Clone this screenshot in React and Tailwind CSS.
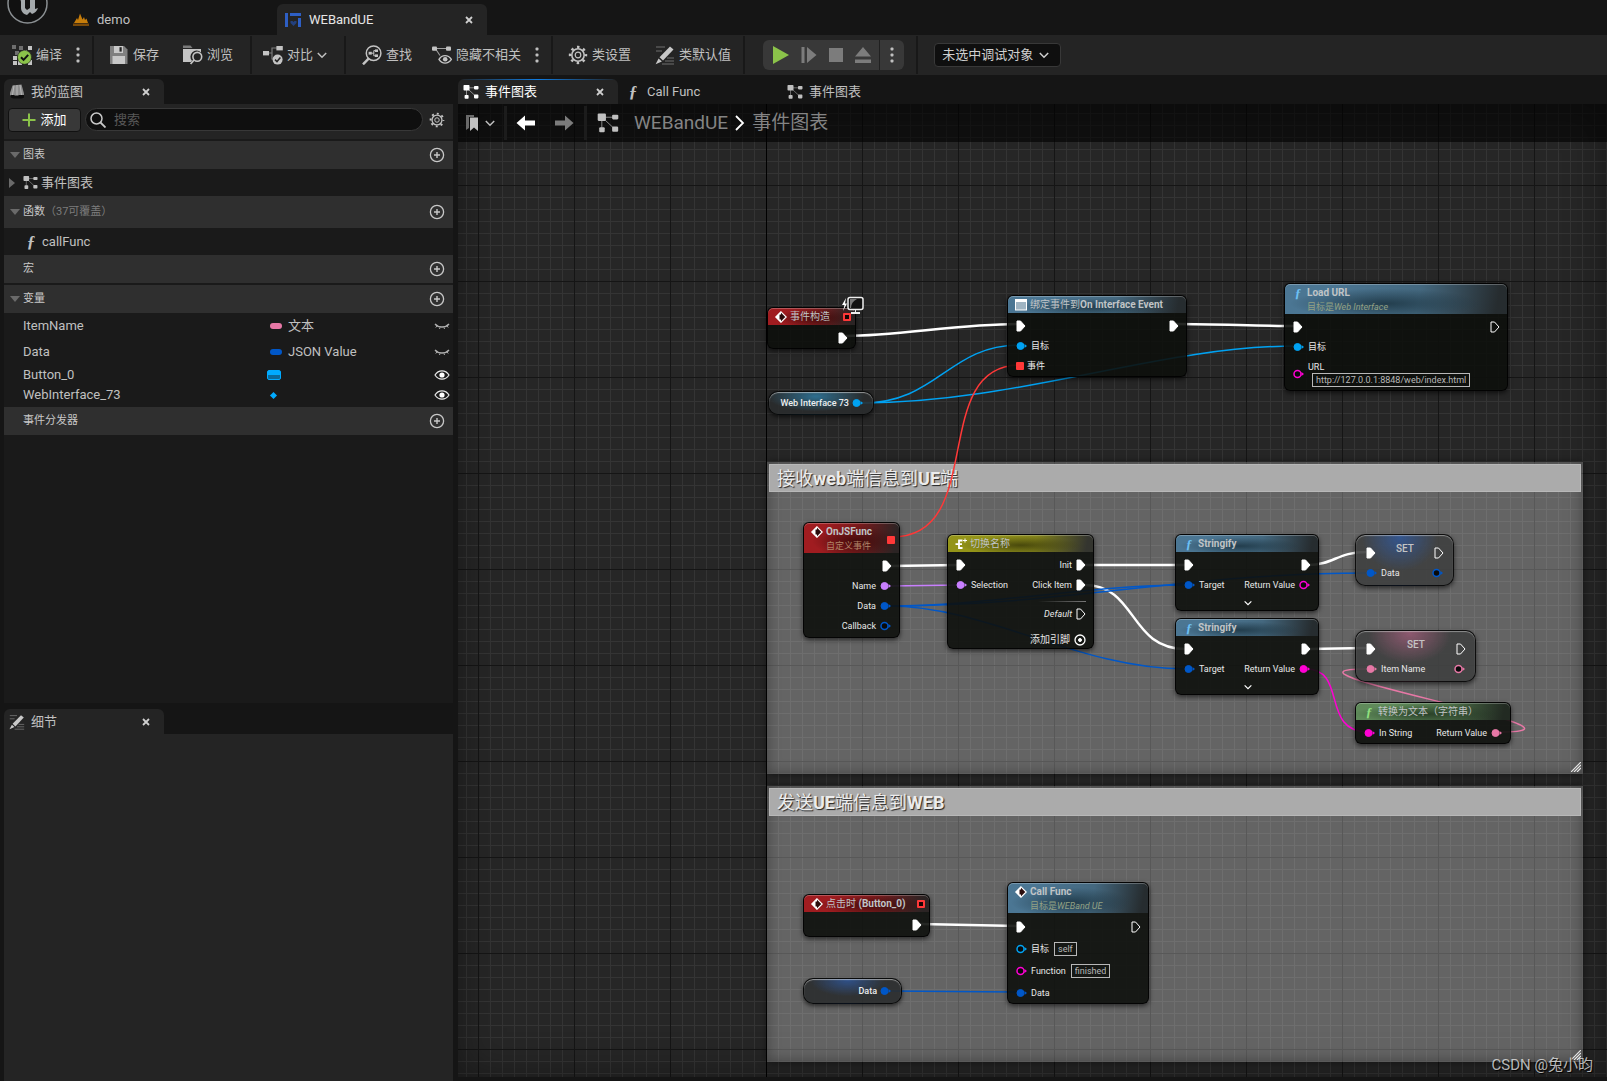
import React from "react";
import clsx from "clsx";

// ---------- icons ----------

const GraphIcon = ({ className = "size-4" }) => (
  <svg viewBox="0 0 16 16" className={className} fill="currentColor">
    <path d="M3.5 3.5L3.5 13M3.5 3.8H13M6 6l7 6.5" stroke="currentColor" strokeWidth="0.7" strokeOpacity="0.7" fill="none" />
    <rect x="0.5" y="1" width="6" height="5.5" rx="0.8" />
    <rect x="11" y="2" width="4.5" height="3.4" rx="0.8" />
    <rect x="1.6" y="11" width="4" height="3.8" rx="0.8" />
    <rect x="11" y="10.6" width="4.4" height="3.8" rx="0.8" />
  </svg>
);

const FuncIcon = ({ className }) => (
  <span aria-hidden="true" className={clsx("inline-block text-center font-['Liberation_Serif',serif] font-bold italic", className)}>
    ƒ
  </span>
);

const CloseIcon = () => (
  <svg viewBox="0 0 8 8" className="size-2">
    <path d="M1 1l6 6M7 1L1 7" stroke="#cfcfcf" strokeWidth="1.8" />
  </svg>
);

const Chevron = ({ className = "size-2.5" }) => (
  <svg viewBox="0 0 10 10" className={className} fill="none" stroke="currentColor" strokeWidth="1.5">
    <path d="M0.8 3l4.2 4.2L9.2 3" />
  </svg>
);

const Dots = () => (
  <svg viewBox="0 0 4 16" className="h-4 w-1" fill="#c0c0c0">
    <rect x="0.5" y="0.5" width="3" height="3" rx="1" />
    <rect x="0.5" y="6.5" width="3" height="3" rx="1" />
    <rect x="0.5" y="12.5" width="3" height="3" rx="1" />
  </svg>
);

const CompileIcon = () => (
  <svg viewBox="0 0 20 20" className="size-5">
    <g fill="#6e6e6e">
      <rect x="0" y="0" width="4" height="4" />
      <rect x="7" y="1" width="4" height="4" />
      <rect x="3" y="6" width="4" height="4" />
    </g>
    <g fill="#c4c4c4">
      <rect x="16" y="1" width="4" height="4" />
      <rect x="1" y="11" width="4" height="4" />
      <rect x="1" y="16" width="4" height="4" />
      <rect x="6" y="15" width="4" height="5" />
      <rect x="16" y="15" width="4" height="5" />
      <rect x="11" y="5" width="4" height="3" />
    </g>
    <circle cx="12.5" cy="12.3" r="7" fill="#8bc34a" stroke="#1b1b1b" strokeWidth="0.6" />
    <path d="M9 12.2l2.6 2.7 4.6-5" fill="none" stroke="#111" strokeWidth="2" />
  </svg>
);

const SaveIcon = () => (
  <svg viewBox="0 0 20 20" className="size-5">
    <path d="M1 1h14l3.5 3.5V19H1z" fill="#808080" />
    <path d="M5 1h9v7H5z" fill="#c8c8c8" />
    <rect x="10.5" y="2.2" width="2.2" height="4.4" fill="#242424" />
    <rect x="3.5" y="11" width="12.5" height="8" fill="#c8c8c8" />
  </svg>
);

const BrowseIcon = () => (
  <svg viewBox="0 0 20 20" className="size-5">
    <path d="M0 0.5h7.5l2 2.5H0z" fill="#7a7a7a" />
    <path d="M0 4h18v3.6a5.8 5.8 0 0 0-9 8.2L8 17H0z" fill="#c4c4c4" />
    <circle cx="14.3" cy="11.8" r="4.4" fill="none" stroke="#c4c4c4" strokeWidth="1.6" />
    <path d="M11 15l-3.4 4" stroke="#c4c4c4" strokeWidth="1.8" />
  </svg>
);

const DiffIcon = () => (
  <svg viewBox="0 0 20 20" className="size-5">
    <path d="M5 8h4M9 8V3h5M9 8v6h2" fill="none" stroke="#7a7a7a" strokeWidth="1.2" />
    <rect x="0" y="6" width="6" height="4.4" fill="#c4c4c4" />
    <rect x="13.4" y="1" width="6.4" height="4.4" fill="#c4c4c4" />
    <circle cx="14.6" cy="14.6" r="5" fill="#c4c4c4" />
    <path d="M12 14.6l2 2 3.4-4" fill="none" stroke="#242424" strokeWidth="1.5" />
  </svg>
);

const FindIcon = () => (
  <svg viewBox="0 0 20 20" className="size-5" fill="none" stroke="#c4c4c4">
    <circle cx="11.6" cy="8.2" r="7.3" strokeWidth="1.5" />
    <path d="M6.6 13.6L1 19.4" strokeWidth="2.4" />
    <path d="M9.4 8.2h2.4M14.6 5.6h-2.8v5.2h2.8" strokeWidth="1" />
    <rect x="6.6" y="6.8" width="3.2" height="2.8" fill="#c4c4c4" stroke="none" />
    <rect x="13" y="4.4" width="3" height="2.6" fill="#c4c4c4" stroke="none" />
    <rect x="13" y="9.4" width="3" height="2.6" fill="#c4c4c4" stroke="none" />
  </svg>
);

const HideIcon = () => (
  <svg viewBox="0 0 20 20" className="size-5">
    <path d="M3 3.5h13M4 4.5l4 6" stroke="#a0a0a0" strokeWidth="1.1" />
    <rect x="0" y="1.4" width="5" height="4.4" rx="1" fill="#c4c4c4" />
    <rect x="14" y="1.4" width="5" height="4.4" rx="1" fill="#c4c4c4" />
    <path d="M7 14.4c3-5 9-5 12.4 0-3.4 5-9.4 5-12.4 0z" fill="#242424" stroke="#c4c4c4" strokeWidth="1.4" />
    <circle cx="13.2" cy="14.2" r="2.3" fill="#c4c4c4" />
  </svg>
);

const GearIcon = ({ className = "size-5" }) => (
  <svg viewBox="0 0 20 20" className={className} fill="none" stroke="#c4c4c4">
    <circle cx="10" cy="10" r="6.2" strokeWidth="1.6" />
    <circle cx="10" cy="10" r="2.8" strokeWidth="1.2" />
    <circle cx="10" cy="10" r="8" strokeWidth="2.4" strokeDasharray="2.5 3.783" strokeDashoffset="1.25" />
  </svg>
);

const PencilIcon = ({ className = "size-5" }) => (
  <svg viewBox="0 0 20 20" className={className}>
    <path d="M1 2h9M1 6h6M12 13h7M10 16h9M7 19h12" stroke="#6e6e6e" strokeWidth="1.1" />
    <path d="M15 1.5l3.5 3L8 15.5l-3.5-3.2z" fill="#c8c8c8" />
    <path d="M3.6 13.4l3.3 3L0.6 19.2z" fill="#c8c8c8" />
  </svg>
);

const PlusCircle = () => (
  <svg viewBox="0 0 16 16" className="size-4" fill="none" stroke="#c8c8c8">
    <circle cx="8" cy="8" r="6.6" strokeWidth="1.3" />
    <path d="M8 5v6M5 8h6" strokeWidth="1.4" />
  </svg>
);

const BlueprintIcon = () => (
  <svg viewBox="0 0 16 16" className="size-4">
    <path d="M3.5 1.500l9-1 2.500 9v2H1V9z" fill="#8c8c8c" />
    <path d="M5 1.500L3.500 11M8 1v10M11 1l1.500 10" stroke="#b8b8b8" strokeWidth="1" />
    <path d="M1.500 11h3.500l1 1h3l1-1h5v2.500l-2 1h-9l-2-1z" fill="#0d0d0d" />
  </svg>
);

const OpenEye = () => (
  <svg viewBox="0 0 16 12" className="h-3 w-4">
    <path d="M1 6c3.5-5.5 10.5-5.5 14 0-3.5 5.5-10.5 5.5-14 0z" fill="none" stroke="#e8e8e8" strokeWidth="1.2" />
    <circle cx="8" cy="6" r="2.6" fill="#fff" />
  </svg>
);

const ClosedEye = () => (
  <svg viewBox="0 0 16 12" className="h-3 w-4" fill="none" stroke="#b0b0b0">
    <path d="M1 4c3.5 4 10.5 4 14 0" strokeWidth="1.3" />
    <path d="M3 6L1.8 7.5M6 7.5L5.5 9M10 7.5l0.5 1.5M13 6l1.2 1.5" strokeWidth="1" />
  </svg>
);

const EventIcon = () => (
  <svg viewBox="0 0 12 12" className="size-3 shrink-0">
    <path d="M6 0.800L11.200 6 6 11.200 0.800 6z" fill="#2a0c0c" stroke="#fff" strokeWidth="1.200" />
    <path d="M6 0.500L0.500 6 6 11.500V8.500H4.500v-5H6z" fill="#fff" />
  </svg>
);

const SwitchIcon = () => (
  <svg viewBox="0 0 12 12" className="size-3 shrink-0" stroke="#fff" fill="none">
    <path d="M7.5 2.500H4v7.500h3.500M0.500 6.200H7" strokeWidth="1.800" />
    <path d="M10 0.500v4M8 2.500h4" strokeWidth="1" />
  </svg>
);

const WindowIcon = () => (
  <svg viewBox="0 0 12 12" className="size-3 shrink-0">
    <rect x="0.5" y="0.5" width="11" height="10.5" fill="#9fb4c2" stroke="#fff" />
    <rect x="0" y="0" width="12" height="3" fill="#fff" />
  </svg>
);

// ---------- pins ----------

const pinColors = {
  exec: "text-white",
  object: "text-[#00a2f2]",
  struct: "text-[#0057c8]",
  string: "text-[#ff00d4]",
  name: "text-[#c87fff]",
  text: "text-[#e778a6]",
  delegate: "text-[#ff3838]",
};

function Pin({ type, hollow }) {
  if (type === "exec") {
    return (
      <svg viewBox="0 0 10 12" className="h-3 w-2.5 shrink-0">
        <path
          d="M1 1h3.5L9 6l-4.5 5H1z"
          fill={hollow ? "none" : "#fff"}
          stroke="#fff"
          strokeWidth="1"
          strokeLinejoin="round"
        />
      </svg>
    );
  }
  if (type === "delegate") {
    return <Delegate hollow={hollow} />;
  }
  return (
    <svg viewBox="0 0 12 10" className={clsx("h-2.5 w-3 shrink-0", pinColors[type])}>
      <path d="M8.5 3l2.5 2-2.5 2z" fill="currentColor" />
      <circle cx="4.5" cy="5" r="3.5" fill={hollow ? "#0a0a0a" : "currentColor"} stroke="currentColor" strokeWidth={hollow ? 1.5 : 1} />
    </svg>
  );
}

const Delegate = ({ hollow }) => (
  <span
    className={clsx(
      "size-2 shrink-0 rounded-[1px]",
      hollow ? "border-2 border-[#ff3838] bg-[#1a0505]" : "bg-[#ff3838]"
    )}
  />
);

// latin runs are bold, chinese stays regular
function Mixed({ text }) {
  return text.split(/([\u2e80-\uffef]+)/).map((part, i) =>
    /[\u2e80-\uffef]/.test(part) ? (
      <span key={i} className="font-normal">{part}</span>
    ) : (
      <span key={i} className="font-bold">{part}</span>
    )
  );
}

// ---------- nodes ----------

const tones = {
  red: "bg-[radial-gradient(ellipse_at_55%_60%,#3a0808cc,transparent_60%),linear-gradient(100deg,#a01c20_20%,#7a1a1c_55%,#2b2424_95%)]",
  blue: "bg-[radial-gradient(ellipse_at_45%_65%,#1a323fcc,transparent_55%),linear-gradient(100deg,#4b7693_20%,#44687f_60%,#262c2f_95%)]",
  olive: "bg-[radial-gradient(ellipse_at_50%_60%,#3a3a08cc,transparent_60%),linear-gradient(100deg,#949418_20%,#82821c_60%,#34352f_95%)]",
  green: "bg-[radial-gradient(ellipse_at_45%_65%,#1f331fcc,transparent_60%),linear-gradient(100deg,#5f8a5a_20%,#4c6e48_60%,#222a22_95%)]",
};

function Node({ x, y, size, tone, icon, title, subtitle, badge, children }) {
  return (
    <div
      style={{ left: x, top: y }}
      className={clsx(
        "absolute flex flex-col rounded-md border border-black/80 bg-[#0d100c]/90 shadow-[0_2px_5px_rgba(0,0,0,0.6)]",
        size
      )}
    >
      <div
        className={clsx(
          "flex shrink-0 gap-[3px] rounded-t-[5px] pr-1 pl-[7px] shadow-[inset_0_1px_0_rgba(255,255,255,0.25)]",
          subtitle ? "h-[30px] pt-[3px]" : "h-[17px] items-center",
          tones[tone]
        )}
      >
        {icon}
        <div className="min-w-0 flex-1 text-[10px] leading-3 whitespace-nowrap text-[#c0c4c6]">
          <p>
            <Mixed text={title} />
          </p>
          {subtitle && <p className="pt-0.5 text-[9px] text-[#93a184]">{subtitle}</p>}
        </div>
        {badge}
      </div>
      <div className="flex flex-1 flex-col pt-[3px] pr-[7px] pl-2">{children}</div>
    </div>
  );
}

const Row = ({ className = "h-5", children }) => (
  <div className={clsx("flex shrink-0 items-center justify-between text-[9px] leading-3 whitespace-nowrap text-[#e8e8e8]", className)}>
    {children}
  </div>
);

const In = ({ type, hollow, label, children }) => (
  <div className="flex items-center gap-[3px]">
    <Pin type={type} hollow={hollow} />
    {label && <span>{label}</span>}
    {children}
  </div>
);

const Out = ({ type, hollow, label, italic }) => (
  <div className="ml-auto flex items-center gap-1">
    {label && <span className={clsx(italic && "italic")}>{label}</span>}
    <Pin type={type} hollow={hollow} />
  </div>
);

const PinInput = ({ label, value, className }) => (
  <input
    aria-label={label}
    defaultValue={value}
    className={clsx("field-sizing-content h-3.5 border border-[#b8b8b8] bg-transparent px-[3px] text-[9px] leading-3 text-[#b8b8b8] outline-none", className)}
  />
);

function Stringify({ x, y, connected }) {
  return (
    <Node x={x} y={y} size="h-[77px] w-[144px]" tone="blue" title="Stringify" icon={<FuncIcon className="w-3 text-[13px] leading-3 text-[#6cc0f5]" />}>
      <Row>
        <In type="exec" />
        <Out type="exec" />
      </Row>
      <Row>
        <In type="struct" label="Target" />
        <Out type="string" hollow={!connected} label="Return Value" />
      </Row>
      <button aria-label="展开" className="mx-auto pt-1 text-white">
        <Chevron className="size-2" />
      </button>
    </Node>
  );
}

const glows = {
  object: "bg-[radial-gradient(ellipse_at_45%_20%,#2f7fa8cc,transparent_60%)]",
  struct: "bg-[radial-gradient(ellipse_at_45%_5%,#2f5ca8bb,transparent_50%)]",
  text: "bg-[radial-gradient(ellipse_at_45%_5%,#a8607fbb,transparent_45%)]",
};

function SetNode({ x, y, size, type, label }) {
  return (
    <div
      style={{ left: x, top: y }}
      className={clsx(
        "absolute h-[52px] rounded-[10px] border border-black/80 bg-[#3e3f3f]/90 pt-2 pr-[9px] pl-2.5 shadow-[inset_0_1px_1px_rgba(255,255,255,0.4),0_2px_5px_rgba(0,0,0,0.6)]",
        glows[type],
        size
      )}
    >
      <Row className="h-5">
        <Pin type="exec" />
        <span className="self-start text-[10px] leading-3 font-medium text-[#c4c4c4]">SET</span>
        <Pin type="exec" hollow />
      </Row>
      <Row>
        <In type={type} label={label} />
        <Out type={type} hollow />
      </Row>
    </div>
  );
}

const GetNode = ({ x, y, size, type, label }) => (
  <div
    style={{ left: x, top: y }}
    className={clsx(
      "absolute flex items-center justify-end gap-[3px] rounded-[10px] border border-black/80 bg-[#2a2c2d]/90 pr-[9px] text-[9px] leading-3 font-medium whitespace-nowrap text-[#eee] shadow-[inset_0_1px_1px_rgba(255,255,255,0.5),0_2px_4px_rgba(0,0,0,0.6)]",
      glows[type],
      size
    )}
  >
    {label}
    <Pin type={type} />
  </div>
);

function Comment({ x, y, size, title }) {
  return (
    <div
      style={{ left: x, top: y }}
      className={clsx(
        "absolute flex flex-col bg-[#f5f5f5]/30 p-0.5 shadow-[inset_0_0_14px_rgba(0,0,0,0.35),0_0_8px_rgba(0,0,0,0.5)]",
        size
      )}
    >
      <h2 className="h-7 border border-[#b8b8b8] bg-[#ababab] pl-[7px] text-lg leading-7 text-[#ececec] [text-shadow:1px_1px_1px_#222]">
        <Mixed text={title} />
      </h2>
      <svg viewBox="0 0 10 10" className="mt-auto ml-auto size-2.5" stroke="#e8e8e8" strokeWidth="1.2">
        <path d="M0 10L10 0M3 10l7-7M6 10l4-4" />
      </svg>
    </div>
  );
}

const wires = [
  { d: "M388 232C440 232 500 220 560 220", kind: "exec" },
  { d: "M718 220C760 220 800 222 840 222", kind: "exec" },
  { d: "M404 299C480 299 490 241 562 241", kind: "object" },
  { d: "M404 299C560 299 700 242 838 242", kind: "object" },
  { d: "M434 433C530 433 470 261 562 261", kind: "delegate" },
  { d: "M432 462L500 461", kind: "exec" },
  { d: "M432 482L502 481", kind: "name" },
  { d: "M626 461L728 461", kind: "exec" },
  { d: "M626 481C680 481 670 545 728 545", kind: "exec" },
  { d: "M430 502C530 502 630 481 728 481", kind: "struct" },
  { d: "M430 502C600 502 730 469 908 469", kind: "struct" },
  { d: "M430 502C530 502 620 565 728 565", kind: "struct" },
  { d: "M850 461C875 461 880 448 908 448", kind: "exec" },
  { d: "M850 545L908 544", kind: "exec" },
  { d: "M848 565C890 565 862 628 910 628", kind: "string" },
  { d: "M1042 628C1163 628 791 565 908 565", kind: "text" },
  { d: "M462 820L560 822", kind: "exec" },
  { d: "M430 887L558 888", kind: "struct" },
];

function Wires() {
  return (
    <svg className="pointer-events-none absolute inset-0 size-full" fill="none">
      {wires.map(({ d, kind }) => (
        <path key={d} d={d} stroke="currentColor" strokeWidth={kind === "exec" ? 2.5 : 1.5} className={pinColors[kind]} />
      ))}
    </svg>
  );
}

function Canvas() {
  return (
    <div className="absolute inset-x-0 top-0 bottom-1 overflow-hidden bg-[#262626] bg-[linear-gradient(to_right,#151515_1px,transparent_1px),linear-gradient(to_bottom,#151515_1px,transparent_1px),linear-gradient(to_right,#343434_1px,transparent_1px),linear-gradient(to_bottom,#343434_1px,transparent_1px)] [background-position:20px_81px,20px_81px,8px_9px,8px_9px] [background-size:96px_96px,96px_96px,12px_12px,12px_12px] shadow-[inset_0_0_40px_rgba(0,0,0,0.4)]">
      <div className="absolute inset-y-0 left-[308px] w-px bg-black" />
      <Comment x={309} y={358} size="h-[312px] w-[816px]" title="接收web端信息到UE端" />
      <Comment x={309} y={682} size="h-[276px] w-[816px]" title="发送UE端信息到WEB" />
      <Wires />

      <Node x={309} y={203} size="h-[42px] w-[89px]" tone="red" title="事件构造" icon={<EventIcon />} badge={<Delegate hollow />}>
        <Row>
          <Out type="exec" />
        </Row>
        <svg viewBox="0 0 24 20" className="absolute -top-3 -right-2.5 h-5 w-6">
          <path d="M5 2L1 9h2.5L2 15l4-7.5H4z" fill="#fff" />
          <rect x="7" y="1.5" width="15" height="12" rx="2" fill="#111" stroke="#eee" strokeWidth="1.5" />
          <path d="M9 3h7c-4 2-6 5-6 9H9z" fill="#777" />
          <path d="M14 14v2h-4v2h9v-2h-4v-2z" fill="#eee" />
        </svg>
      </Node>

      <Node x={549} y={191} size="h-[82px] w-[180px]" tone="blue" title="绑定事件到On Interface Event" icon={<WindowIcon />}>
        <Row>
          <In type="exec" />
          <Out type="exec" />
        </Row>
        <Row>
          <In type="object" label="目标" />
        </Row>
        <Row>
          <In type="delegate" label="事件" />
        </Row>
      </Node>

      <GetNode x={310} y={287} size="h-6 w-[106px]" type="object" label="Web Interface 73" />

      <Node
        x={826}
        y={179}
        size="h-[108px] w-[224px]"
        tone="blue"
        title="Load URL"
        subtitle={<>目标是<i>Web Interface</i></>}
        icon={<FuncIcon className="w-3 text-[13px] leading-3 text-[#6cc0f5]" />}
      >
        <Row>
          <In type="exec" />
          <Out type="exec" hollow />
        </Row>
        <Row>
          <In type="object" label="目标" />
        </Row>
        <Row className="h-[34px]">
          <div className="flex items-center gap-[3px]">
            <Pin type="string" hollow />
            <div className="flex flex-col">
              <span>URL</span>
              <PinInput label="URL" value="http://127.0.0.1:8848/web/index.html" className="ml-1" />
            </div>
          </div>
        </Row>
      </Node>

      <Node x={345} y={418} size="h-[116px] w-[97px]" tone="red" title="OnJSFunc" subtitle={<span className="text-[#b08468]">自定义事件</span>} icon={<EventIcon />} badge={<span className="flex items-center"><Delegate /></span>}>
        <Row>
          <Out type="exec" />
        </Row>
        <Row>
          <Out type="name" label="Name" />
        </Row>
        <Row>
          <Out type="struct" label="Data" />
        </Row>
        <Row>
          <Out type="struct" hollow label="Callback" />
        </Row>
      </Node>

      <Node x={489} y={430} size="h-[115px] w-[147px]" tone="olive" title="切换名称" icon={<SwitchIcon />}>
        <Row>
          <In type="exec" />
          <Out type="exec" label="Init" />
        </Row>
        <Row>
          <In type="name" label="Selection" />
          <Out type="exec" label="Click Item" />
        </Row>
        <div className="mt-1.5 ml-auto h-px w-12 bg-linear-to-r from-transparent to-[#777]" />
        <Row className="h-6">
          <Out type="exec" hollow label="Default" italic />
        </Row>
        <button className="ml-auto flex h-7 items-center gap-1 text-[10px] leading-3 text-[#e4e4e4]">
          添加引脚
          <svg viewBox="0 0 12 12" className="size-3" fill="none" stroke="#fff">
            <circle cx="6" cy="6" r="5" strokeWidth="1.3" />
            <circle cx="6" cy="6" r="1.5" fill="#fff" />
          </svg>
        </button>
      </Node>

      <Stringify x={717} y={430} />
      <Stringify x={717} y={514} connected />
      <SetNode x={897} y={430} size="w-[99px]" type="struct" label="Data" />
      <SetNode x={897} y={526} size="w-[121px]" type="text" label="Item Name" />

      <Node x={897} y={598} size="h-[42px] w-[156px]" tone="green" title="转换为文本（字符串）" icon={<FuncIcon className="w-3 text-[13px] leading-3 text-[#8fe07f]" />}>
        <Row>
          <In type="string" label="In String" />
          <Out type="text" label="Return Value" />
        </Row>
      </Node>

      <Node x={345} y={790} size="h-[43px] w-[127px]" tone="red" title="点击时 (Button_0)" icon={<EventIcon />} badge={<Delegate hollow />}>
        <Row>
          <Out type="exec" />
        </Row>
      </Node>

      <Node x={549} y={778} size="h-[122px] w-[142px]" tone="blue" title="Call Func" subtitle={<>目标是<i>WEBand UE</i></>} icon={<EventIcon />}>
        <Row className="h-[22px]">
          <In type="exec" />
          <Out type="exec" hollow />
        </Row>
        <Row className="h-[22px]">
          <In type="object" hollow label="目标">
            <PinInput label="目标" value="self" className="ml-0.5" />
          </In>
        </Row>
        <Row className="h-[22px]">
          <In type="string" hollow label="Function">
            <PinInput label="Function" value="finished" className="ml-0.5" />
          </In>
        </Row>
        <Row className="h-[22px]">
          <In type="struct" label="Data" />
        </Row>
      </Node>

      <GetNode x={345} y={874} size="h-[26px] w-[99px]" type="struct" label="Data" />

      <p className="absolute right-3.5 bottom-0.5 text-[15px] leading-5 text-white/70 [text-shadow:1px_1px_1px_#000]">CSDN @兔小昀</p>
    </div>
  );
}

// ---------- chrome ----------

const ToolButton = ({ icon, children }) => (
  <button className="flex items-center gap-1 whitespace-nowrap">
    {icon}
    {children}
  </button>
);

const Sep = () => <div className="my-px w-0.5 shrink-0 self-stretch bg-[#181818]" />;

function TitleBar() {
  return (
    <header className="flex h-[35px] shrink-0 items-end overflow-hidden">
      <svg viewBox="0 0 42 35" className="ml-1.5 h-[35px] w-[42px] shrink-0">
        <circle cx="21.5" cy="3.5" r="19.5" fill="#111" stroke="#8a8f92" strokeWidth="1.5" />
        <path d="M12-2c2 1 3 2 3 4v6c0 3 2 6 6 7l3-3 2 2c3-1 5-3 6-6l-3 1V-2h-5v10l-3 2-2-2V-2z" fill="#a4a9ac" />
      </svg>
      <button className="ml-[25px] flex h-[31px] w-[204px] items-center gap-2">
        <svg viewBox="0 0 16 13" className="h-[13px] w-4">
          <path d="M1 10L4 5l1 2 2-6.5 2.500 6L11 4l1 3 1.500-1.500L15 10z" fill="#c77d0a" />
          <rect x="0" y="10.5" width="16" height="2.5" fill="#7a4a0a" />
        </svg>
        demo
      </button>
      <div className="flex h-[31px] w-[210px] items-center rounded-t-md bg-[#242424] px-2">
        <button className="flex flex-1 items-center gap-2 text-[#e6e6e6]">
          <svg viewBox="0 0 16 14" className="h-3.5 w-4" fill="#2e5fc4">
            <rect x="0" y="0" width="3" height="14" />
            <rect x="5" y="0" width="11" height="3" />
            <rect x="13" y="5" width="3" height="9" />
            <path d="M5.5 8h2l1 1 1-1h2v2l-3 3-3-3z" fill="#23407e" />
          </svg>
          WEBandUE
        </button>
        <button aria-label="关闭" className="px-1.5"><CloseIcon /></button>
      </div>
    </header>
  );
}

function Toolbar() {
  return (
    <div className="flex h-10 shrink-0 items-center bg-[#242424]">
      <div className="flex items-center px-3">
        <ToolButton icon={<CompileIcon />}>编译</ToolButton>
        <button aria-label="编译选项" className="ml-3.5"><Dots /></button>
      </div>
      <Sep />
      <div className="flex gap-6 pr-[17px] pl-[15px]">
        <ToolButton icon={<SaveIcon />}>保存</ToolButton>
        <ToolButton icon={<BrowseIcon />}>浏览</ToolButton>
      </div>
      <Sep />
      <div className="flex pr-[17px] pl-[11px]">
        <ToolButton icon={<DiffIcon />}>
          对比
          <Chevron />
        </ToolButton>
      </div>
      <Sep />
      <div className="flex items-center gap-5 pr-3 pl-4">
        <ToolButton icon={<FindIcon />}>查找</ToolButton>
        <ToolButton icon={<HideIcon />}>隐藏不相关</ToolButton>
        <button aria-label="隐藏选项" className="-ml-1.5"><Dots /></button>
      </div>
      <Sep />
      <div className="flex gap-6 pr-3 pl-[15px]">
        <ToolButton icon={<GearIcon />}>类设置</ToolButton>
        <ToolButton icon={<PencilIcon />}>类默认值</ToolButton>
      </div>
      <Sep />
      <div className="pr-3 pl-[18px]">
        <div className="flex h-[30px] w-[141px] items-center rounded-md bg-[#383838] text-[#7c7c7c]">
          <button aria-label="播放" className="ml-2.5">
            <svg viewBox="0 0 16 18" className="h-[18px] w-4"><path d="M0 0l16 9-16 9z" fill="#8bc34a" /></svg>
          </button>
          <button aria-label="逐帧" className="ml-3">
            <svg viewBox="0 0 16 18" className="h-[18px] w-4" fill="currentColor"><path d="M0.5 1h3v16h-3zM6 1l9.5 8L6 17z" /></svg>
          </button>
          <button aria-label="停止" className="ml-3 size-3.5 bg-[#7c7c7c]" />
          <button aria-label="弹出" className="ml-3">
            <svg viewBox="0 0 16 18" className="h-[18px] w-4" fill="currentColor"><path d="M8 1l8 9.5H0zM0 13.5h16V17H0z" /></svg>
          </button>
          <div className="ml-2 h-full w-px bg-[#202020]" />
          <button aria-label="播放选项" className="mx-auto"><Dots /></button>
        </div>
      </div>
      <Sep />
      <div className="relative ml-4 text-[#d0d0d0]">
        <select aria-label="调试对象" className="h-6 w-[127px] appearance-none rounded border border-[#383838] bg-[#0f0f0f] pl-[7px] text-[13px] outline-none">
          <option>未选中调试对象</option>
        </select>
        <span className="pointer-events-none absolute inset-y-0 right-3 flex items-center"><Chevron /></span>
      </div>
    </div>
  );
}

const PanelTab = ({ icon, title }) => (
  <div className="flex h-[25px] w-40 shrink-0 items-center rounded-t-md bg-[#242424] pr-2 pl-[5px]">
    <button className="flex flex-1 items-center gap-1.5 text-[#c0c0c0]">
      {icon}
      {title}
    </button>
    <button aria-label="关闭" className="px-1.5"><CloseIcon /></button>
  </div>
);

function SectionHeader({ title, extra, open, className = "h-7" }) {
  return (
    <div className={clsx("flex shrink-0 items-center bg-[#2f2f2f] pr-2 pl-1.5 text-[11px]", className)}>
      <svg viewBox="0 0 10 6" className="mr-[3px] h-1.5 w-2.5">
        {open && <path d="M0 0h10L5 6z" fill="#6a6a6a" />}
      </svg>
      <h3 className="text-[#c8c8c8]">{title}</h3>
      {extra && <span className="text-[#7c7c7c]">{extra}</span>}
      <button aria-label={"添加" + title} className="ml-auto"><PlusCircle /></button>
    </div>
  );
}

const variables = [
  { name: "ItemName", type: "文本", pill: "bg-[#e778a6]", height: "h-[26px]" },
  { name: "Data", type: "JSON Value", pill: "bg-[#0057c8]", height: "h-[26px]" },
  { name: "Button_0", icon: "button", visible: true, height: "h-5" },
  { name: "WebInterface_73", icon: "dot", visible: true, height: "h-5" },
];

function VariableRow({ name, type, pill, icon, visible, height }) {
  return (
    <li className={clsx("flex items-center pr-[3px] pl-[19px]", height)}>
      <span className="w-[240px]">{name}</span>
      <span className="flex w-[23px] items-center justify-center">
        {pill && <span className={clsx("ml-0.5 h-1.5 w-3 rounded-full", pill)} />}
        {icon === "button" && (
          <span className="mr-0.5 h-2.5 w-3.5 rounded-xs border border-[#00aaff] bg-linear-to-b from-[#00aaff] from-50% to-[#0a6a9c] to-50%" />
        )}
        {icon === "dot" && <span className="mr-0.5 size-[5px] rotate-45 bg-[#00aaff]" />}
      </span>
      <span className="ml-0.5 flex-1">{type}</span>
      <button aria-label={"切换可见性 " + name}>{visible ? <OpenEye /> : <ClosedEye />}</button>
    </li>
  );
}

function Sidebar() {
  return (
    <aside className="flex w-[458px] shrink-0 flex-col pr-[5px] pl-1">
      <PanelTab icon={<BlueprintIcon />} title="我的蓝图" />
      <section className="flex flex-1 flex-col bg-[#1a1a1a] text-[#c0c0c0]">
        <div className="flex h-[37px] shrink-0 items-start gap-1 border-b-2 border-[#1a1a1a] bg-[#242424] px-1 pt-1">
          <button className="flex h-6 w-[73px] items-center justify-center gap-1 rounded border border-[#111] bg-[#383838] text-white">
            <svg viewBox="0 0 14 14" className="size-3.5" stroke="#8bc34a" strokeWidth="2"><path d="M7 0.5v13M0.5 7h13" /></svg>
            添加
          </button>
          <label className="flex h-[23px] flex-1 items-center gap-2 rounded-full border border-[#383838] bg-[#0f0f0f] pl-1">
            <svg viewBox="0 0 16 16" className="size-4" fill="none" stroke="#c8c8c8">
              <circle cx="6.5" cy="6.5" r="5.5" strokeWidth="1.5" />
              <path d="M10.5 10.5l5 5" strokeWidth="1.8" />
            </svg>
            <input type="search" aria-label="搜索" placeholder="搜索" className="min-w-0 flex-1 bg-transparent text-[13px] outline-none placeholder:text-[#585858]" />
          </label>
          <button aria-label="设置" className="mt-1 mr-1 ml-0.5"><GearIcon className="size-4" /></button>
        </div>

        <SectionHeader title="图表" open />
        <div className="flex h-[27px] shrink-0 items-center pl-[5px]">
          <svg viewBox="0 0 6 10" className="mr-2 h-2.5 w-1.5"><path d="M0 0l6 5-6 5z" fill="#6a6a6a" /></svg>
          <GraphIcon className="mr-[3px] size-[15px]" />
          事件图表
        </div>
        <SectionHeader title="函数" extra="（37可覆盖）" open className="h-8" />
        <div className="flex h-[27px] shrink-0 items-center pl-[19px]">
          <FuncIcon className="mr-[3px] w-4 text-[17px] leading-4" />
          callFunc
        </div>
        <SectionHeader title="宏" />
        <div className="h-0.5 shrink-0" />
        <SectionHeader title="变量" open />
        <ul className="pb-0.5">
          {variables.map((v) => (
            <VariableRow key={v.name} {...v} />
          ))}
        </ul>
        <SectionHeader title="事件分发器" />
      </section>
      <div className="h-1.5 shrink-0" />
      <PanelTab icon={<PencilIcon className="size-4" />} title="细节" />
      <section className="h-[347px] shrink-0 bg-[#242424]" />
    </aside>
  );
}

function GraphPanel() {
  return (
    <main className="flex min-w-0 flex-1 flex-col">
      <div className="flex h-[25px] shrink-0 items-center">
        <div className="relative flex h-full w-40 items-center overflow-hidden rounded-t-md bg-[#242424] pr-2 pl-[5px]">
          <div className="absolute inset-x-0 top-0 h-px bg-linear-to-r from-transparent via-[#0f7be0] to-transparent" />
          <button className="flex flex-1 items-center gap-1.5 text-white">
            <GraphIcon />
            事件图表
          </button>
          <button aria-label="关闭" className="px-1.5"><CloseIcon /></button>
        </div>
        <button className="flex w-40 items-center gap-1.5 pl-[7px]">
          <FuncIcon className="w-4 text-[17px] leading-4" />
          Call Func
        </button>
        <button className="flex items-center gap-1.5 pl-[9px]">
          <GraphIcon />
          事件图表
        </button>
      </div>
      <div className="relative flex-1">
        <Canvas />
        <nav className="relative flex h-[38px] items-center bg-black/60 pl-2">
          <button aria-label="书签" className="flex items-center gap-[7px]">
            <svg viewBox="0 0 12 16" className="h-4 w-3">
              <path d="M0 0h8v2H3v11l-3 2z" fill="#6a6a6a" />
              <path d="M4 2.5h8V16l-4-3.5L4 16z" fill="#c0c0c0" />
            </svg>
            <Chevron />
          </button>
          <div className="mx-[9px] h-[34px] w-[3px] bg-[#1c1c1c]" />
          <button aria-label="后退">
            <svg viewBox="0 0 20 16" className="h-4 w-5" fill="#fff"><path d="M9 0.500v5h10v5H9v5L0.500 8z" /></svg>
          </button>
          <button aria-label="前进" className="ml-[18px]">
            <svg viewBox="0 0 20 16" className="h-4 w-5" fill="#7c7c7c"><path d="M11 0.500v5H1v5h10v5l8.500-7.500z" /></svg>
          </button>
          <div className="mx-2.5 h-[34px] w-[3px] bg-[#1c1c1c]" />
          <GraphIcon className="size-[22px]" />
          <a href="#root" className="ml-[15px] text-[19px] leading-6 text-[#848484]">WEBandUE</a>
          <svg viewBox="0 0 10 16" className="mx-[7px] h-4 w-2.5" fill="none" stroke="#fff" strokeWidth="1.8"><path d="M1 1l7 7-7 7" /></svg>
          <a href="#root" className="text-[19px] leading-6 text-[#848484]">事件图表</a>
        </nav>
      </div>
    </main>
  );
}

export default function App() {
  return (
    <div className="flex h-screen flex-col overflow-hidden bg-[#151515] font-[Roboto,'Noto_Sans_CJK_SC',sans-serif] text-[13px] leading-5 text-[#c0c0c0]">
      <TitleBar />
      <Toolbar />
      <div className="flex min-h-0 flex-1 pt-1">
        <Sidebar />
        <GraphPanel />
      </div>
    </div>
  );
}
